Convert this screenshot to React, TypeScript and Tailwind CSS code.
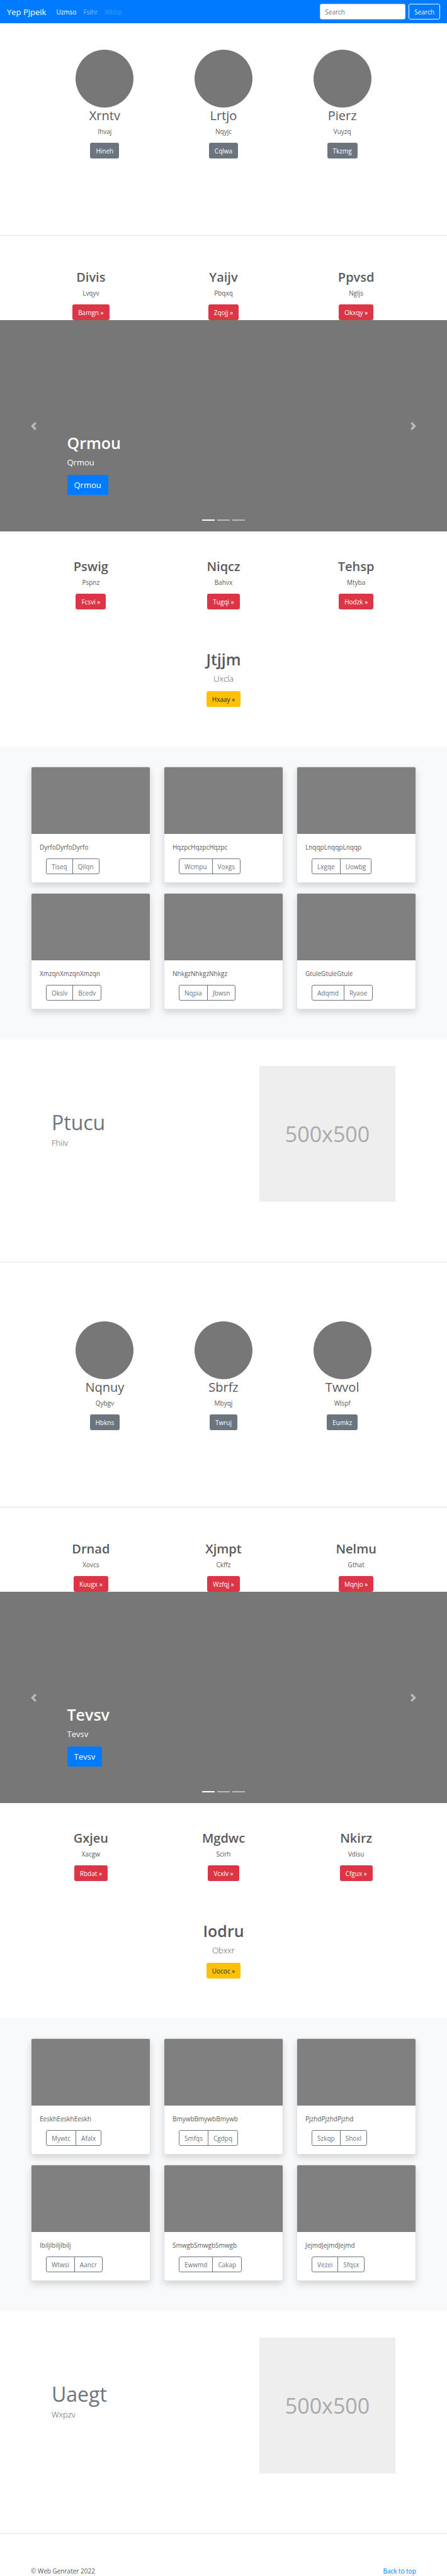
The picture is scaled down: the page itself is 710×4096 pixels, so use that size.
import React from "react";

type Item = { title: string; text: string; action: string };
type Card = { text: string; actions: [string, string] };
type Block = {
  people: Item[];
  top: Item[];
  slide: string;
  bottom: Item[];
  callout: Item;
  cards: Card[];
  feature: { title: string; text: string };
};

const blocks: Block[] = [
  {
    people: [
      { title: "Xrntv", text: "Ihvaj", action: "Hineh" },
      { title: "Lrtjo", text: "Nqyjc", action: "Cqlwa" },
      { title: "Pierz", text: "Vuyzq", action: "Tkzmg" },
    ],
    top: [
      { title: "Divis", text: "Lvqyv", action: "Bamgn »" },
      { title: "Yaijv", text: "Pbqxq", action: "Zqojj »" },
      { title: "Ppvsd", text: "Ngljs", action: "Okxqy »" },
    ],
    slide: "Qrmou",
    bottom: [
      { title: "Pswig", text: "Pspnz", action: "Fcsvi »" },
      { title: "Niqcz", text: "Bahvx", action: "Tugqi »" },
      { title: "Tehsp", text: "Mtyba", action: "Hodzk »" },
    ],
    callout: { title: "Jtjjm", text: "Uxcla", action: "Hxaay »" },
    cards: [
      { text: "DyrfoDyrfoDyrfo", actions: ["Tiseq", "Qilqn"] },
      { text: "HqzpcHqzpcHqzpc", actions: ["Wcmpu", "Voxgs"] },
      { text: "LnqqpLnqqpLnqqp", actions: ["Lxgqe", "Uowbg"] },
      { text: "XmzqnXmzqnXmzqn", actions: ["Okslv", "Bcedv"] },
      { text: "NhkgzNhkgzNhkgz", actions: ["Nqpia", "Jbwsn"] },
      { text: "GtuleGtuleGtule", actions: ["Adqmd", "Ryaoe"] },
    ],
    feature: { title: "Ptucu", text: "Fhiiv" },
  },
  {
    people: [
      { title: "Nqnuy", text: "Qybgv", action: "Hbkns" },
      { title: "Sbrfz", text: "Mbyqj", action: "Twruj" },
      { title: "Twvol", text: "Wlspf", action: "Eumkz" },
    ],
    top: [
      { title: "Drnad", text: "Xovcs", action: "Kuugx »" },
      { title: "Xjmpt", text: "Ckffz", action: "Wzfqj »" },
      { title: "Nelmu", text: "Gthat", action: "Mqnjo »" },
    ],
    slide: "Tevsv",
    bottom: [
      { title: "Gxjeu", text: "Xacgw", action: "Rbdat »" },
      { title: "Mgdwc", text: "Scirh", action: "Vcxlv »" },
      { title: "Nkirz", text: "Vdisu", action: "Cfgux »" },
    ],
    callout: { title: "Iodru", text: "Obxxr", action: "Uococ »" },
    cards: [
      { text: "EeskhEeskhEeskh", actions: ["Mywtc", "Afalx"] },
      { text: "BmywbBmywbBmywb", actions: ["Smfqs", "Cgdpq"] },
      { text: "PjzhdPjzhdPjzhd", actions: ["Szkqp", "Shoxl"] },
      { text: "IbiljIbiljIbilj", actions: ["Wtwsi", "Aancr"] },
      { text: "SmwgbSmwgbSmwgb", actions: ["Ewwmd", "Cakap"] },
      { text: "JejmdJejmdJejmd", actions: ["Vezei", "Sfqsx"] },
    ],
    feature: { title: "Uaegt", text: "Wxpzv" },
  },
];

const buttonColors = {
  secondary: "bg-[#6c757d] text-white",
  danger: "bg-[#dc3545] text-white",
  warning: "bg-[#ffc107] text-[#212529]",
};

function LinkButton({ color, children }: { color: keyof typeof buttonColors; children: React.ReactNode }) {
  return (
    <a href="#" className={`mx-auto flex h-[25px] w-fit items-center rounded-[3px] px-[9px] ${buttonColors[color]}`}>
      {children}
    </a>
  );
}

function Navbar() {
  return (
    <nav className="flex h-[37px] items-center bg-[#007bff] px-[11px] text-white">
      <a href="#" className="text-[13px] leading-5">Yep Pjpeik</a>
      <div className="ml-4 flex flex-1 gap-[11px]">
        <a href="#">Uzmso</a>
        <a href="#" className="text-white/50">Fsihr</a>
        <span className="text-white/25">Wklzp</span>
      </div>
      <form className="flex gap-[5px]" onSubmit={(e) => e.preventDefault()}>
        <input
          type="text"
          aria-label="Search"
          placeholder="Search"
          className="h-[25px] w-[136px] rounded-[3px] border border-[#ced4da] bg-white px-[7px] text-[#495057] placeholder:text-[#6c757d]"
        />
        <button type="submit" className="h-[25px] rounded-[3px] border border-[#f8f9fa] px-2 text-[#f8f9fa]">
          Search
        </button>
      </form>
    </nav>
  );
}

function ThreeColumns({ items }: { items: Item[] }) {
  return (
    <div className="mx-auto grid max-w-[632px] grid-cols-3 text-center">
      {items.map((item) => (
        <div key={item.title}>
          <h2 className="mb-[5px] text-[20px] leading-[25px] font-semibold">{item.title}</h2>
          <p className="mb-[10px]">{item.text}</p>
          <LinkButton color="danger">{item.action}</LinkButton>
        </div>
      ))}
    </div>
  );
}

function Chevron({ d }: { d: string }) {
  return (
    <svg viewBox="0 0 8 8" className="size-[13px]" fill="#fff" aria-hidden="true">
      <path d={d} />
    </svg>
  );
}

function Carousel({ label }: { label: string }) {
  return (
    <section className="relative flex h-[336px] flex-col justify-end bg-[#777] px-[15%] pb-[58px] text-white">
      <h1 className="mb-[5px] text-[25px] leading-[31px] font-semibold">{label}</h1>
      <p className="mb-[10px] text-[13px] leading-5">{label}</p>
      <a href="#" className="flex h-8 items-center self-start rounded-[3px] bg-[#007bff] px-[11px] text-[13px]">
        {label}
      </a>
      <button type="button" aria-label="Previous" className="absolute inset-y-0 left-0 flex w-[15%] items-center justify-center opacity-50">
        <Chevron d="M5.25 0l-4 4 4 4 1.5-1.5L4.25 4l2.5-2.5L5.25 0z" />
      </button>
      <button type="button" aria-label="Next" className="absolute inset-y-0 right-0 flex w-[15%] items-center justify-center opacity-50">
        <Chevron d="M2.75 0l-1.5 1.5L3.75 4l-2.5 2.5L2.75 8l4-4-4-4z" />
      </button>
      <div className="absolute inset-x-0 bottom-[17px] flex justify-center gap-1">
        <span className="h-[2px] w-5 bg-white" />
        <span className="h-[2px] w-5 bg-white/50" />
        <span className="h-[2px] w-5 bg-white/50" />
      </div>
    </section>
  );
}

function Album({ cards }: { cards: Card[] }) {
  return (
    <section className="bg-[#f8f9fa] pt-8 pb-12">
      <div className="mx-auto grid max-w-[632px] grid-cols-3 gap-x-[21px] gap-y-4 px-[10px]">
        {cards.map((card) => (
          <article
            key={card.text}
            className="overflow-hidden rounded-[3px] border border-black/12 bg-white shadow-[0_5px_11px_rgba(0,0,0,0.15)]"
          >
            <div className="h-[106px] bg-[#808080]" />
            <div className="p-[13px]">
              <p className="mb-[10px]">{card.text}</p>
              <div className="ml-[10px] flex">
                <button type="button" className="h-[25px] rounded-l-[3px] border border-[#6c757d] px-2 text-[#6c757d]">
                  {card.actions[0]}
                </button>
                <button type="button" className="-ml-px h-[25px] rounded-r-[3px] border border-[#6c757d] px-2 text-[#6c757d]">
                  {card.actions[1]}
                </button>
              </div>
            </div>
          </article>
        ))}
      </div>
    </section>
  );
}

function PageBlock({ block }: { block: Block }) {
  return (
    <>
      <section className="mx-auto grid max-w-[566px] grid-cols-3 pt-[42px] text-center">
        {block.people.map((item) => (
          <div key={item.title}>
            <div className="mx-auto size-[92px] rounded-full bg-[#777]" />
            <h2 className="mb-[5px] text-[20px] leading-[25px]">{item.title}</h2>
            <p className="mb-[10px]">{item.text}</p>
            <LinkButton color="secondary">{item.action}</LinkButton>
          </div>
        ))}
      </section>
      <hr className="mt-[122px] mb-[53px] border-black/10" />
      <ThreeColumns items={block.top} />
      <Carousel label={block.slide} />
      <div className="pt-[43px]">
        <ThreeColumns items={block.bottom} />
      </div>
      <section className="pt-16 pb-[63px] text-center">
        <h1 className="mb-[5px] text-[25px] leading-[31px] font-semibold">{block.callout.title}</h1>
        <p className="mb-[10px] text-[13px] leading-5 font-light">{block.callout.text}</p>
        <LinkButton color="warning">{block.callout.action}</LinkButton>
      </section>
      <Album cards={block.cards} />
      <section className="mx-auto flex max-w-[546px] items-start justify-between pt-[42px]">
        <div className="pt-[70px]">
          <h2 className="mb-[2px] text-[32px] leading-10 text-[#6c757d]">{block.feature.title}</h2>
          <p className="text-[13px] leading-5 font-light">{block.feature.text}</p>
        </div>
        <div className="flex size-[216px] items-center justify-center bg-[#eee] text-[34px] leading-10 text-[#aaa]">500x500</div>
      </section>
      <hr className="mt-[95px] mb-[52px] border-black/10" />
    </>
  );
}

export default function App() {
  return (
    <div className="bg-white font-['Open_Sans','Noto_Sans',sans-serif] text-[10px] leading-4 text-[#5a5a5a]">
      <Navbar />
      <main>
        {blocks.map((block) => (
          <PageBlock key={block.slide} block={block} />
        ))}
      </main>
      <footer className="mx-auto flex max-w-[632px] justify-between px-[10px] leading-[15px]">
        <p>© Web Genrater 2022</p>
        <a href="#" className="text-[#007bff]">Back to top</a>
      </footer>
    </div>
  );
}
